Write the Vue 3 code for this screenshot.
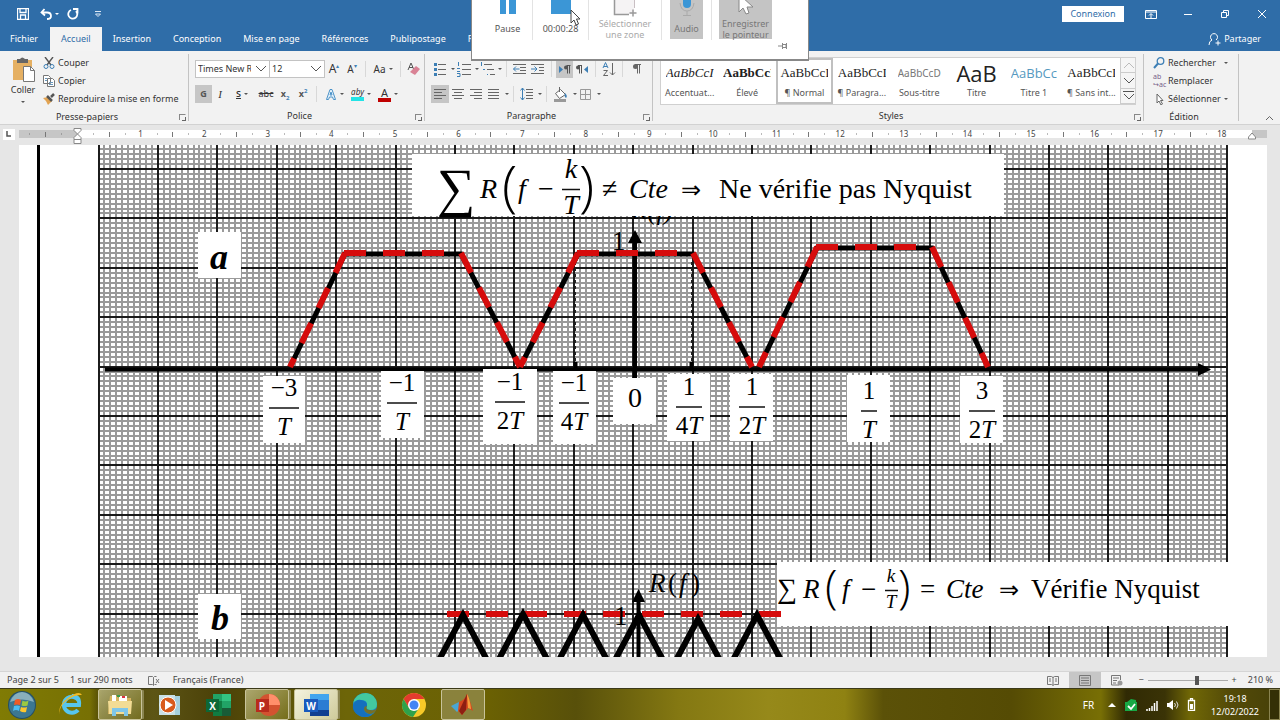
<script setup>
import { ref } from 'vue'

const tabs = ['Fichier', 'Accueil', 'Insertion', 'Conception', 'Mise en page', 'Références', 'Publipostage', 'Révision']
const fontName = ref('Times New Roman')
const fontSize = ref('12')
const zoom = ref(74)

const lines = (rows) => rows.map(([x1, x2, y]) => `M${x1} ${y}H${x2}`).join('')
const grey = (d) => `<path d="${d}" stroke="#666" fill="none"/>`
const blue = (d) => `<path d="${d}" stroke="#3d7fb5" fill="none"/>`

const paraTop = [
  { id: 'bul', label: 'Puces', w: 17, arrow: true, art: grey(lines([[7, 15, 3.5], [7, 15, 8.5], [7, 15, 13.5]])) + '<path d="M3 2h3v3h-3zM3 7h3v3h-3zM3 12h3v3h-3z" fill="#3d7fb5"/>' },
  { id: 'num', label: 'Numérotation', w: 17, arrow: true, art: grey(lines([[7, 16, 3.5], [7, 16, 8.5], [7, 16, 13.5]])) + blue('M3.500 1v4M2 7.500h3M2 10.500h3M2 12.500h3v3h-3') },
  { id: 'mul', label: 'Liste à plusieurs niveaux', w: 16, arrow: true, art: grey(lines([[5, 13, 3.5], [8, 15, 8.5], [11, 16, 13.5]])) + blue('M2.500 1v4M4 8.500h2M8 13.500h1') },
  { id: 's1', sep: true },
  { id: 'out', label: 'Diminuer le retrait', w: 18, art: grey(lines([[2, 15, 3.5], [9, 15, 6.5], [9, 15, 9.5], [2, 15, 12.5]])) + blue('M2.500 8h6M5 5.500L2.500 8L5 10.500') },
  { id: 'in', label: 'Augmenter le retrait', w: 18, art: grey(lines([[2, 15, 3.5], [10, 15, 6.5], [10, 15, 9.5], [2, 15, 12.5]])) + blue('M2 8h6M5.500 5.500L8 8L5.500 10.500') },
  { id: 's2', sep: true },
  { id: 'ltr', label: 'Gauche à droite', w: 17, on: true, art: '<path d="M3 5l4 3.500l-4 3.500z" fill="#3d7fb5"/><path d="M10.500 4.500h4M11.500 4.500v8M13.500 4.500v8" stroke="#555"/><circle cx="10" cy="6.500" r="2" fill="#555"/>' },
  { id: 'rtl', label: 'Droite à gauche', w: 18, art: '<path d="M15 5l-4 3.500l4 3.500z" fill="#3d7fb5"/><path d="M5 4.500h4M6.500 4.500v8M8.500 4.500v8" stroke="#555"/><circle cx="5" cy="6.500" r="2" fill="#555"/>' },
  { id: 's3', sep: true },
  { id: 'az', label: 'Trier', w: 18, art: blue('M3 7L5.500 1.500L8 7M4 5.500h3') + grey('M3.500 9.500h4L3.500 14.500h4.500M12.500 2v12M10 11.500L12.500 14L15 11.500') },
  { id: 's4', sep: true },
  { id: 'pil', label: 'Afficher tout', w: 18, art: '<path d="M8 3.500h6M10.500 3.500v9M12.500 3.500v9" stroke="#666"/><circle cx="8.500" cy="5.500" r="2.500" fill="#666"/>' },
]
const paraBottom = [
  { id: 'l', label: 'Aligner à gauche', w: 18, on: true, art: grey(lines([[3, 15, 3.5], [3, 11, 6.5], [3, 15, 9.5], [3, 11, 12.5]])) },
  { id: 'c', label: 'Centrer', w: 18, art: grey(lines([[3, 15, 3.5], [5, 13, 6.5], [3, 15, 9.5], [5, 13, 12.5]])) },
  { id: 'r', label: 'Aligner à droite', w: 18, art: grey(lines([[3, 15, 3.5], [7, 15, 6.5], [3, 15, 9.5], [7, 15, 12.5]])) },
  { id: 'j', label: 'Justifier', w: 17, arrow: true, art: grey(lines([[3, 14, 3.5], [3, 14, 6.5], [3, 14, 9.5], [3, 14, 12.5]])) },
  { id: 's5', sep: true },
  { id: 'sp', label: 'Interligne', w: 17, arrow: true, art: grey(lines([[8, 15, 3.5], [8, 15, 6.5], [8, 15, 9.5], [8, 15, 12.5]])) + blue('M4.500 2v12M2.500 4.500l2-2.500l2 2.500M2.500 11.500l2 2.500l2-2.500') },
  { id: 's6', sep: true },
  { id: 'fill', label: 'Trame de fond', w: 19, arrow: true, art: '<path d="M4.500 7.500l5-4l5 5l-6 4z" fill="#fff" stroke="#666"/><path d="M8.500 6v-5" stroke="#666"/><path d="M14 7q3 3 1 5q-2-1-1-5" fill="#3d7fb5"/><path d="M3 14.500h12" stroke="#999" stroke-width="3"/>' },
  { id: 'brd', label: 'Bordures', w: 17, arrow: true, art: '<path d="M3.500 3.500h10v10h-10zM8.500 3.500v10M3.500 8.500h10" fill="none" stroke="#999"/>' },
]

const styleItems = [
  { name: 'Accentuat...', text: 'AaBbCcI', cls: 'italic' },
  { name: 'Élevé', text: 'AaBbCcI', cls: 'strong' },
  { name: '¶ Normal', text: 'AaBbCcI', cls: '', on: true },
  { name: '¶ Paragra...', text: 'AaBbCcI', cls: '' },
  { name: 'Sous-titre', text: 'AaBbCcD', cls: 'sub' },
  { name: 'Titre', text: 'AaB', cls: 'title' },
  { name: 'Titre 1', text: 'AaBbCc', cls: 'head' },
  { name: '¶ Sans int...', text: 'AaBbCcI', cls: '' },
]

/* Ruler: one centimetre is 63.6 units, origin at 77 */
const cm = 63.6
const rulerNumbers = Array.from({ length: 18 }, (_, i) => ({ n: i + 1, x: 77 + cm * (i + 1) }))
let rulerTicks = 'M45.500 132v5'
let rulerDots = 'M29 134h1M61 134h1'
for (let i = 0; i < 18; i++) {
  rulerTicks += `M${Math.round(77 + cm * (i + 0.5)) + 0.5} 132v5`
  rulerDots += `M${Math.round(77 + cm * (i + 0.25))} 134h1M${Math.round(77 + cm * (i + 0.75))} 134h1`
}

/* Graph paper */
let minor = ''
let major = ''
for (let i = 0; i <= 190; i++) {
  const x = Math.round(98.5 + i * 5.94)
  if (i % 10 === 0) major += `M${x} 145V657`
  else minor += `M${x} 145V657`
}
for (let i = -4; i < 99; i++) {
  const y = Math.round(169 + i * 4.94)
  if (i % 10 === 0) major += `M98 ${y}H1227`
  else minor += `M98 ${y}H1227`
}

const fractions = [
  { x: 263, y: 376, w: 42, h: 67, cx: 284, bar: 408, half: 15, n: '−3', d: 'T' },
  { x: 381, y: 371, w: 43, h: 67, cx: 402, bar: 403, half: 15, n: '−1', d: 'T' },
  { x: 483, y: 369, w: 54, h: 75, cx: 510, bar: 402, half: 15, n: '−1', d: '2T' },
  { x: 553, y: 371, w: 43, h: 73, cx: 574, bar: 403, half: 15, n: '−1', d: '4T' },
  { x: 667, y: 374, w: 43, h: 67, cx: 689, bar: 407, half: 13, n: '1', d: '4T' },
  { x: 730, y: 374, w: 43, h: 67, cx: 752, bar: 407, half: 13, n: '1', d: '2T' },
  { x: 847, y: 375, w: 43, h: 67, cx: 869, bar: 411, half: 8, n: '1', d: 'T' },
  { x: 960, y: 376, w: 43, h: 67, cx: 982, bar: 411, half: 13, n: '3', d: '2T' },
]
const traps = [
  { l: 290, a: 345, b: 461, r: 520, y: 254 },
  { l: 520, a: 578, b: 693, r: 752, y: 254 },
  { l: 759, a: 817, b: 932, r: 988, y: 248 },
]
const tents = [[463, 614], [523, 613], [583, 614], [639, 614], [698, 618], [757, 614]]
</script>

<template>
  <div class="screen">
    <header class="top">
      <div class="titlebar">
        <div class="quick">
          <button aria-label="Enregistrer"><svg width="12" height="12"><path d="M.5.5h11v11h-11zM3 .5v4h6v-4M3.500 11v-4h5v4" fill="none" stroke="#fff" stroke-width="1.300" /></svg></button>
          <button aria-label="Annuler"><svg width="20" height="12"><path d="M4.500 1L1.500 4.500L5 7.500M2 4.500h5q4 0 4 3.500q0 3-4 3" fill="none" stroke="#fff" stroke-width="1.800" /><path d="M15 5h4l-2 2z" fill="#fff" /></svg></button>
          <button aria-label="Rétablir"><svg width="12" height="12"><path d="M4 2a4.500 4.500 0 1 0 5 1M6 1h4.500v4.500" fill="none" stroke="#fff" stroke-width="1.800" /></svg></button>
          <button aria-label="Personnaliser"><svg width="8" height="8"><path d="M1 1.500h6M1.500 4h5L4 6.500z" fill="none" stroke="#dbe8f5" /></svg></button>
        </div>
        <div class="window">
          <button class="login">Connexion</button>
          <button aria-label="Options du ruban"><svg width="12" height="10"><path d="M.5 1.500h11v8h-11zM.5 3h11M6 9V5M4 6.500l2-2l2 2" fill="none" stroke="#fff" /></svg></button>
          <button aria-label="Réduire"><svg width="12" height="10"><path d="M2 5.500h8" stroke="#fff" /></svg></button>
          <button aria-label="Restaurer"><svg width="12" height="10"><path d="M2.500 3.500h5v5h-5zM4.500 3V1.500h5v5H8" fill="none" stroke="#fff" /></svg></button>
          <button aria-label="Fermer"><svg width="12" height="10"><path d="M2 1l8 8M10 1l-8 8" stroke="#fff" /></svg></button>
        </div>
      </div>
      <nav class="tabs">
        <button v-for="t in tabs" :key="t" :class="{ active: t === 'Accueil' }">{{ t }}</button>
        <button class="share"><svg width="13" height="13"><path d="M1 12q0-4 3-5a3.500 3.500 0 1 1 4 0M7.500 10h5M10 7.500v5" fill="none" stroke="#fff" /></svg>Partager</button>
      </nav>
    </header>

    <section class="ribbon">
      <div class="group clip">
        <div class="body row">
          <button class="paste">
            <svg width="24" height="25"><path d="M2 3h19v20H2z" fill="#e5b063" /><path d="M6 2h3q2-3 5 0h3v4H6z" fill="#666" /><path d="M12.500 9.500h7l4 4v11h-11z" fill="#fff" stroke="#777" /><path d="M19.500 9.500v4h4" fill="none" stroke="#777" /></svg>
            Coller<span class="tri"></span>
          </button>
          <div class="stack">
            <button><svg width="12" height="12"><path d="M2 0l6 8M10 0L4 8" stroke="#555" stroke-width="1.400" /><circle cx="3" cy="9.500" r="2" fill="none" stroke="#3d7fb5" /><circle cx="9" cy="9.500" r="2" fill="none" stroke="#3d7fb5" /></svg>Couper</button>
            <button><svg width="12" height="12"><path d="M.5.5h5l2 2v6h-7zM4.500 3.500h5l2 2v6h-7z" fill="#fff" stroke="#777" /><path d="M6 7.500h4M6 9.500h4M2 3.500h2M2 5.500h2" stroke="#6a98bd" /></svg>Copier</button>
            <button><svg width="12" height="12"><path d="M0 5l5-1l4 4-4 4q-2-5-5-7z" fill="#e2a352" /><path d="M4 3l5 5M8 4l3-3" stroke="#555" stroke-width="2.500" /></svg>Reproduire la mise en forme</button>
          </div>
        </div>
        <footer>Presse-papiers<i class="launch"></i></footer>
      </div>

      <div class="group font">
        <div class="body tools">
          <div class="line">
            <div class="combo family"><select v-model="fontName" aria-label="Police"><option>Times New Roman</option></select><svg width="12" height="8"><path d="M1 1l5 5l5-5" fill="none" stroke="#555" /></svg></div>
            <div class="combo size"><select v-model="fontSize" aria-label="Taille"><option>12</option></select><svg width="12" height="8"><path d="M1 1l5 5l5-5" fill="none" stroke="#555" /></svg></div>
            <button class="w18 big">A<sup>▴</sup></button><button class="w18 mid">A<sup>▾</sup></button>
            <i class="sep"></i><button class="w26 mid">Aa<span class="tri"></span></button><i class="sep"></i>
            <button class="w18" aria-label="Effacer la mise en forme"><svg width="14" height="14"><path d="M1 8L4 1l3 7M2 5.500h4" fill="none" stroke="#555" /><path d="M3 10l6-6l4 3l-5 6z" fill="#d98295" /></svg></button>
          </div>
          <div class="line">
            <button class="w17 on bold">G</button><button class="w16 it">I</button><button class="w28 under"><u>S</u><span class="tri"></span></button><button class="w20 strike">abc</button><button class="w18 bold">x<sub>2</sub></button><button class="w18 bold">x<sup>2</sup></button>
            <i class="sep"></i>
            <button class="w26" aria-label="Effets"><svg width="12" height="13"><path d="M1.500 11.500L5 1.500h2l3.500 10h-2L7.500 9h-3l-1 2.500zM5 7h2L6 4z" fill="#e9f4fc" stroke="#4b92c8" /></svg><span class="tri"></span></button>
            <button class="w28" aria-label="Surlignage"><span class="mark">aby</span><span class="tri"></span></button>
            <button class="w26" aria-label="Couleur"><span class="color">A</span><span class="tri"></span></button>
          </div>
        </div>
        <footer>Police<i class="launch"></i></footer>
      </div>

      <div class="group para">
        <div class="body tools">
          <div v-for="(set, k) in [paraTop, paraBottom]" :key="k" class="line">
            <template v-for="b in set" :key="b.id">
              <i v-if="b.sep" class="sep"></i>
              <button v-else :class="{ on: b.on }" :aria-label="b.label"><svg :width="b.w" height="17" v-html="b.art"></svg><span v-if="b.arrow" class="tri"></span></button>
            </template>
          </div>
        </div>
        <footer>Paragraphe<i class="launch"></i></footer>
      </div>

      <div class="group styles">
        <div class="body">
          <div class="gallery">
            <button v-for="s in styleItems" :key="s.name" :class="{ sel: s.on }"><span class="sample" :class="s.cls">{{ s.text }}</span><span>{{ s.name }}</span></button>
            <div class="scroll">
              <button aria-label="Précédent"><svg width="13" height="9"><path d="M2 7l5-5l5 5" fill="none" stroke="#bbb" /></svg></button>
              <button aria-label="Suivant"><svg width="13" height="9"><path d="M2 2l5 5l5-5" fill="none" stroke="#555" /></svg></button>
              <button aria-label="Tous les styles"><svg width="13" height="11"><path d="M1 1.500h11M2 4l5 5l5-5" fill="none" stroke="#555" /></svg></button>
            </div>
          </div>
        </div>
        <footer>Styles<i class="launch"></i></footer>
      </div>

      <div class="group edit">
        <div class="body stack">
          <button><svg width="12" height="12"><circle cx="7.500" cy="4" r="3.300" fill="none" stroke="#3d7fb5" stroke-width="1.300" /><path d="M5 6.500L1 11" stroke="#3d7fb5" stroke-width="2" /></svg>Rechercher<span class="tri gap"></span></button>
          <button><span class="swap">ab<br>↪ac</span>Remplacer</button>
          <button><svg width="12" height="12"><path d="M4 1v9l2-2l2 4l1.500-1l-2-3.500H10z" fill="#fff" stroke="#666" /></svg>Sélectionner<span class="tri"></span></button>
        </div>
        <footer>Édition</footer>
      </div>
      <button class="fold" aria-label="Réduire le ruban"><svg width="9" height="6"><path d="M1 5l3.500-3.500L8 5" fill="none" stroke="#666" /></svg></button>
    </section>

    <svg class="ruler" viewBox="0 125 1280 20" preserveAspectRatio="xMinYMin slice">
      <rect x="3" y="129" width="12" height="11" fill="#fff" /><path d="M7 131v5h4" fill="none" stroke="#555" stroke-width="1.500" />
      <rect x="19" y="130" width="58" height="8" fill="#c6c6c6" /><rect x="77" y="130" width="1175" height="8" fill="#fff" /><rect x="1252" y="130" width="15" height="8" fill="#c6c6c6" />
      <path :d="rulerTicks" stroke="#777" /><path :d="rulerDots" stroke="#777" />
      <text v-for="r in rulerNumbers" :key="r.n" :x="r.x" y="137">{{ r.n }}</text>
      <path d="M74 128.500h7v2l-3.500 3.500l-3.500-3.500zM74 139.500v-2l3.500-3.500l3.500 3.500v2zM74 139.500h7v4h-7zM1248.500 139v-2l3.500-4l3.500 4v2z" fill="#fff" stroke="#888" />
    </svg>

    <main class="desk">
      <div class="page">
        <svg class="chart" viewBox="19 145 1248 512" preserveAspectRatio="xMinYMin slice">
          <path d="M38.500 145V657" stroke="#000" stroke-width="3" />
          <path :d="minor" stroke="#9a9a9a" stroke-width="2" />
          <path :d="major" stroke="#1c1c1c" stroke-width="2" />

          <text x="652" y="219" class="m" text-anchor="middle">R(f)</text>
          <rect x="412" y="154" width="592" height="62" fill="#fff" />
          <g class="eq first">
            <text x="437" y="206" class="sum1 up">∑</text><text x="480" y="198">R</text><text x="502" y="206" class="par up">(</text><text x="518" y="198">f</text><text x="538" y="198" class="up">−</text>
            <text x="571" y="178" text-anchor="middle">k</text><path d="M562 189.500h18" /><text x="571" y="214" text-anchor="middle">T</text>
            <text x="579" y="206" class="par up">)</text><text x="602" y="198" class="up">≠</text><text x="629" y="198">Cte</text><text x="681" y="198" class="up arrow">⇒</text>
            <text x="719" y="198" class="up">Ne vérifie pas Nyquist</text>
          </g>

          <rect x="198" y="232" width="43" height="46" fill="#fff" /><text x="219" y="269" class="tag">a</text>
          <rect x="198" y="594" width="43" height="45" fill="#fff" /><text x="220" y="630" class="tag">b</text>

          <path d="M575.500 262V366M691.500 262V366" stroke="#222" stroke-dasharray="3 3" />
          <path d="M105 369.500H1200" stroke="#000" stroke-width="4" /><path d="M1198 363l13 6.500l-13 6.500z" />
          <path d="M575.500 362v8M691.500 362v8" stroke="#000" stroke-width="4" />
          <path d="M635 240v140" stroke="#000" stroke-width="4" /><path d="M628 243l7-13l7 13z" />
          <text x="612" y="250" class="m up">1</text>
          <g fill="none">
            <template v-for="t in traps" :key="t.l">
              <path :d="`M${t.l} 367L${t.a} ${t.y}H${t.b}L${t.r} 367`" stroke="#000" stroke-width="5" />
              <path :d="`M${t.a} ${t.y - 1}L${t.l} 367M${t.a - 1} ${t.y - 1}H${t.b - 2}M${t.b} ${t.y - 1}L${t.r} 367`" class="red" />
            </template>
          </g>

          <g v-for="f in fractions" :key="f.cx" class="frac">
            <rect :x="f.x" :y="f.y" :width="f.w" :height="f.h" fill="#fff" />
            <text :x="f.cx" :y="f.bar - 12" class="up">{{ f.n }}</text>
            <path :d="`M${f.cx - f.half} ${f.bar}h${f.half * 2}`" stroke="#111" stroke-width="1.500" />
            <text :x="f.cx" :y="f.bar + 27"><tspan v-if="f.d.length > 1" class="up">{{ f.d[0] }}</tspan>{{ f.d.slice(-1) }}</text>
          </g>
          <g class="frac"><rect x="613" y="378" width="43" height="46" fill="#fff" /><text x="635" y="407" class="up zero">0</text></g>

          <rect x="777" y="562" width="454" height="64" fill="#fff" />
          <path d="M447 614H784" class="red thick" fill="none" />
          <text x="614" y="625" class="m up">1</text>
          <path v-for="t in tents" :key="t[0]" :d="`M${t[0] - 24} ${t[1] + 46}L${t[0]} ${t[1] + 1}L${t[0] + 24} ${t[1] + 46}`" fill="none" stroke="#000" stroke-width="6" />
          <path d="M638.500 600V657" stroke="#000" stroke-width="4" /><path d="M632 602l6.500-13l6.500 13z" />
          <text y="592" class="m"><tspan x="649">R</tspan><tspan x="668" class="up">(</tspan><tspan x="679">f</tspan><tspan x="691" class="up">)</tspan></text>
          <g class="eq">
            <text x="777" y="598" class="sum2 up">∑</text><text x="803" y="598">R</text><text x="825" y="603" class="par2 up">(</text><text x="842" y="598">f</text><text x="861" y="598" class="up">−</text>
            <text x="891" y="582" class="small">k</text><path d="M885 590.500h13" /><text x="891" y="608" class="small">T</text>
            <text x="898" y="603" class="par2 up">)</text><text x="920" y="598" class="up">=</text><text x="946" y="598">Cte</text><text x="999" y="598" class="up arrow">⇒</text>
            <text x="1031" y="598" class="up">Vérifie Nyquist</text>
          </g>
        </svg>
      </div>
    </main>

    <div class="status">
      <span>Page 2 sur 5</span><span>1 sur 290 mots</span>
      <svg width="12" height="11"><path d="M.5 1.500h4l1 1v8l-1-1h-4zM5.500 2.500l1-1h2M6.500 9.500h2M8 4l3 4M11 4L8 8" fill="none" stroke="#777" /></svg>
      <span>Français (France)</span>
      <div class="views">
        <button aria-label="Mode lecture"><svg width="12" height="11"><path d="M.5 1.500h4l1.500 1l1.500-1h4v8h-4L6 10.500l-1.500-1h-4zM6 2v8M2 4h2M2 6h2M8 4h2M8 6h2" fill="none" stroke="#777" /></svg></button>
        <button class="on" aria-label="Page"><svg width="12" height="11"><path d="M.5.5h11v10h-11zM2 3h8M2 5.500h8M2 8h8" fill="none" stroke="#777" /></svg></button>
        <button aria-label="Web"><svg width="12" height="11"><path d="M8 10H.5V.5h9V5M2 3h6M2 5.500h4M2 8h3" fill="none" stroke="#777" /><circle cx="9" cy="8" r="2.500" fill="#999" /></svg></button>
      </div>
      <div class="zoom"><button>−</button><input v-model="zoom" type="range" aria-label="Zoom" min="10" max="113"><button>+</button></div>
      <span class="pct">210 %</span>
    </div>

    <footer class="taskbar">
      <div class="apps">
        <button aria-label="Démarrer"><svg width="30" height="30" viewBox="0 0 30 30"><circle cx="15" cy="15" r="14" fill="#254f66" /><circle cx="15" cy="15" r="13" fill="#3c7791" /><path d="M3 12Q7 2 15 2t12 10q-12-5-24 0" fill="#a9c7ce" opacity=".7" /><path d="M8 10q3-2 6 0l-1 5q-3-1-6 0z" fill="#ef5b26" /><path d="M15.500 10.500q3 2 6 0l-1 5q-3 1-6 0z" fill="#9bc941" /><path d="M7 16q3-1 6 0l-1 5q-3-2-6 0z" fill="#4cbcf2" /><path d="M14 17q3 1 6 0l-1 5q-3 1-6-1z" fill="#fdc62e" /></svg></button>
        <button aria-label="Internet Explorer"><svg width="26" height="26" viewBox="0 0 26 26"><path d="M21 9A8 8 0 1 0 20 18M6 13h15q1-9-7-9" fill="none" stroke="#57c6ee" stroke-width="4" /><path d="M2 23Q-1 14 10 6T24 3Q16 2 8 9T2 23" fill="#f4b921" /></svg></button>
        <button class="run" aria-label="Explorateur"><svg width="28" height="26" viewBox="0 0 28 26"><path d="M4 4h7l2 2h12v16H2z" fill="#d8b45f" /><path d="M6 3h4v6H6zM13 4h8v5h-8z" fill="#fff" /><path d="M11 3h3v2h-3z" fill="#3a9a4c" /><path d="M16 4h3v2h-3z" fill="#d34" /><path d="M2 9h24l-1 13H3z" fill="#f3dc94" /><path d="M6 24v-8h16v8h-4v-4h-8v4z" fill="#7fc6e8" /></svg></button>
        <button aria-label="Lecteur"><svg width="24" height="24" viewBox="0 0 24 24"><path d="M7 3h16v19H7z" fill="#a5cfdc" /><path d="M2 2h16v20H2z" fill="#c9e0e6" /><circle cx="11" cy="12" r="8" fill="#d95b1c" stroke="#fff" /><path d="M8 7v10l8-5z" fill="#fff" /></svg></button>
        <button aria-label="Excel"><svg width="27" height="24" viewBox="0 0 27 24"><path d="M8 1h18v22H8z" fill="#21a366" /><path d="M17 1h9v7h-9z" fill="#33c481" /><path d="M8 8h9v15H8z" fill="#107c41" /><path d="M17 15h9v8h-9z" fill="#185c37" /><path d="M1 6h13v13H1z" fill="#0d6837" /><text x="7.500" y="17" class="glyph">X</text></svg></button>
        <button class="run" aria-label="PowerPoint"><svg width="27" height="24" viewBox="0 0 27 24"><circle cx="15" cy="12" r="11" fill="#d35230" /><path d="M15 1a11 11 0 0 1 11 11H15z" fill="#ff8f6b" /><path d="M2 6h13v13H2z" fill="#b92b1c" /><text x="8" y="17" class="glyph">P</text></svg></button>
        <button class="run bright" aria-label="Word"><svg width="27" height="24" viewBox="0 0 27 24"><path d="M7 1h19v22H7z" fill="#2b7cd3" /><path d="M7 1h19v6H7z" fill="#41a5ee" /><path d="M7 17h19v6H7z" fill="#103f91" /><path d="M1 6h14v13H1z" fill="#185abd" /><text x="8" y="17" class="glyph">W</text></svg></button>
        <button aria-label="Edge"><svg width="26" height="26" viewBox="0 0 26 26"><circle cx="13" cy="13" r="12" fill="#1683cb" /><path d="M1 11Q4 1 14 1q10 1 11 11q0 6-7 6q-5-1-3-4q1-6-6-6q-6 0-8 3" fill="#43c9a0" /><path d="M1 13q3-6 8-5q6 1 6 6q-3 0-3 4q1 4 8 5q-8 4-14 0t-5-10" fill="#1570bd" /><path d="M15 14q-2 4 3 4q5 1 7-2q-2 6-8 6q-5-2-5-5q0-3 3-3" fill="#75702a" /></svg></button>
        <button aria-label="Chrome"><svg width="26" height="26" viewBox="0 0 26 26"><circle cx="13" cy="13" r="12" fill="#f7c928" /><path d="M2.600 7A12 12 0 0 1 23.400 7H13L8 16z" fill="#e33b2e" /><path d="M2.600 7A12 12 0 0 0 12 25l6-9H8z" fill="#2fa24b" /><circle cx="13" cy="13" r="6" fill="#fff" /><circle cx="13" cy="13" r="4.500" fill="#4285f4" /></svg></button>
        <button class="run dim" aria-label="MATLAB"><svg width="26" height="24" viewBox="0 0 26 24"><path d="M1 13l8-4l3 5l-5 5z" fill="#4aa6d5" /><path d="M9 9q6-2 8-8q2 3 6 17l-5-3l-6 7l-4-4z" fill="#d5481f" /><path d="M17 1l-1 16l-4 5l-3-4z" fill="#8e1f12" /><path d="M17 1q3 5 4 15l-3-1z" fill="#f6a03c" /></svg></button>
      </div>
      <div class="tray">
        <span class="lang">FR</span>
        <svg width="8" height="6"><path d="M0 5h8L4 1z" fill="#fff" /></svg>
        <svg width="14" height="14"><path d="M1 4h12v9H1zM3 4l4-3l5 1v2" fill="#18a845" /><path d="M4 8l3 3l4-5" fill="none" stroke="#fff" stroke-width="1.800" /></svg>
        <svg width="12" height="12"><path d="M1 12v-2M3.500 12V9M6 12V7M8.500 12V4M11 12V2" stroke="#fff" stroke-width="1.500" /></svg>
        <svg width="13" height="12"><path d="M1 4h2l4-3v10l-4-3H1z" fill="#fff" /><path d="M8.500 4q2 2 0 4M10.500 2.500q3 3.500 0 7" fill="none" stroke="#ddd" /></svg>
        <svg width="9" height="13"><path d="M1.500 2.500h6v10h-6zM3.500 2V.5h2V2" fill="none" stroke="#fff" stroke-width="1.300" /><path d="M3 6h3v5H3z" fill="#fff" /></svg>
        <time>19:18<br>12/02/2022</time>
        <button class="peek" aria-label="Afficher le bureau"></button>
      </div>
    </footer>

    <aside class="recorder">
      <button class="r1"><svg width="18" height="18"><path d="M1 0h6v14H1zM10 0h7v14h-7z" fill="#3b96d6" /></svg><span>Pause</span></button>
      <button class="r2"><svg width="22" height="18"><path d="M1 0h20v14H1z" fill="#3b96d6" /></svg><span>00:00:28</span></button>
      <button class="r3"><svg width="26" height="18"><path d="M22.500-1v9" fill="none" stroke="#c9bfc3" /><path d="M3 0h19v14H3z" fill="#f5f3f4" /><path d="M2.500 0v14.500H17M21 9.500v7M17.500 13h7" fill="none" stroke="#999" stroke-width="1.500" /></svg><span>Sélectionner<br>une zone</span></button>
      <button class="r4"><span class="shade"><svg width="20" height="18"><rect x="6" y="-5" width="8" height="13" rx="4" fill="#3b96d6" /><path d="M3 3q1 8 7 8t7-8M10 11v4M6 15.500h8" fill="none" stroke="#aaa" /></svg><span>Audio</span></span></button>
      <button class="r5"><span class="shade"><svg width="20" height="18"><path d="M3-5v17l4-4l3 6l3-1l-2-6h6L5-4z" fill="#fff" stroke="#888" /></svg><span>Enregistrer<br>le pointeur</span></span></button>
      <svg class="pin" width="10" height="8"><path d="M0 4h4M4.500 1v6M5 2.500h3v3H5M8.500 1v6" fill="none" stroke="#888" /></svg>
      <svg class="cursor" width="12" height="18"><path d="M1 1v13l3-3l2 5l2.500-1l-2-5H10z" fill="#fff" stroke="#444" /></svg>
    </aside>
  </div>
</template>

<style>
body { margin: 0; }
</style>

<style scoped>
.screen { position: relative; min-height: 100vh; display: flex; flex-direction: column; overflow: hidden; background: #e6e6e6; font-family: "Noto Sans", "Open Sans", sans-serif; font-size: 9px; line-height: 12px; color: #333; }
button { font: inherit; color: inherit; background: none; border: 0; padding: 0; display: flex; align-items: center; justify-content: center; white-space: nowrap; }
svg { display: block; flex: none; }
.top { background: #2f6da8; color: #fff; }
.titlebar { height: 27px; display: flex; justify-content: space-between; align-items: center; }
.quick { display: flex; align-items: center; gap: 11px; padding-left: 17px; }
.quick button:nth-child(3) { margin-left: -4px; }
.quick button:last-child { margin-left: 4px; }
.window { display: flex; align-items: center; gap: 25px; padding-right: 12px; }
.login { background: #fff; color: #2f6da8; width: 62px; height: 16px; margin-right: -4px; }
.tabs { display: flex; height: 24px; }
.tabs button { padding: 0 11px; }
.tabs button:first-child { padding: 0 12px 0 10px; }
.tabs .active { background: #f3f3f3; color: #2f6da8; }
.tabs .share { margin-left: auto; padding-right: 19px; gap: 3px; }

.ribbon { display: flex; height: 74px; background: #f2f2f2; border-bottom: 1px solid #d2d2d2; box-sizing: border-box; }
.group { position: relative; display: flex; flex-direction: column; border-right: 1px solid #c3c3c3; margin: 3px 0; box-sizing: border-box; }
.clip { width: 189px; }
.font { width: 236px; }
.para { width: 228px; }
.styles { flex: 1; }
.edit { width: 95px; }
.body { flex: 1; }
.group footer { text-align: center; height: 14px; line-height: 18px; margin-right: 14px; }
.launch { position: absolute; right: 2px; bottom: 1px; width: 5px; height: 5px; border: 1px solid #888; border-right-color: transparent; border-bottom: 0; }
.launch::after { content: ""; position: absolute; right: -1px; bottom: -1px; border: solid #666; border-width: 0 1px 1px 0; width: 3px; height: 3px; }
.row { display: flex; }
.paste { width: 46px; flex-direction: column; justify-content: flex-start; padding-top: 3px; gap: 2px; }
.stack { display: flex; flex-direction: column; align-items: flex-start; }
.stack button { gap: 3px; height: 18px; }
.clip .stack { margin-left: -3px; }
.edit .stack { padding-left: 9px; }
.tri { display: inline-block; border: solid transparent; border-width: 2px 2px 0; border-top-color: #555; margin-left: 3px; flex: none; }
.stack .tri { margin-left: 0; }
.paste .tri { margin: 3px 0 0; }
.stack .gap { margin-left: 5px; }
.swap { font-size: 7px; line-height: 8px; color: #765d88; text-align: left; width: 12px; }
.tools { padding: 6px 0 0 6px; display: flex; flex-direction: column; gap: 7px; }
.line { display: flex; align-items: center; height: 18px; }
.sep { width: 1px; height: 16px; background: #d8d8d8; margin: 0 4px; }
.on { background: #c6c6c6; }
.line button { height: 18px; }
.w16 { width: 16px; } .w17 { width: 17px; } .w18 { width: 18px; } .w20 { width: 20px; } .w26 { width: 26px; } .w28 { width: 28px; }
.big { font-size: 12px; } .mid { font-size: 10px; }
sup, sub { font-size: 6px; line-height: 6px; color: #3d7fb5; }
sup { align-self: flex-start; margin-top: 3px; } sub { align-self: flex-end; margin-bottom: 2px; }
.bold { font-weight: 700; color: #555; }
.it { font: italic 11px "Liberation Serif", serif; }
.under { font-weight: 600; }
.strike { text-decoration: line-through; }
.mark { border-bottom: 4px solid #23e3e6; line-height: 10px; font-size: 8px; font-style: italic; }
.color { border-bottom: 4px solid #c00000; line-height: 11px; font-size: 11px; padding: 0 3px; }
.combo { display: flex; align-items: center; box-sizing: border-box; height: 18px; background: #fff; border: 1px solid #c3c3c3; }
.combo select { appearance: none; flex: 1; min-width: 0; border: 0; background: none; font: inherit; color: inherit; padding: 0 0 0 2px; }
.combo svg { margin: 0 2px 0 4px; }
.family { width: 75px; } .size { width: 56px; margin-left: -1px; }
.gallery { display: flex; margin: 3px 7px 0; height: 46px; background: #fff; border: 1px solid #d0d0d0; }
.gallery > button { flex: 1 1 0; min-width: 0; flex-direction: column; gap: 5px; overflow: hidden; color: #555; }
.sel { box-shadow: inset 0 0 0 2px #c0c0c0; }
.sample { font: 13px/18px "Liberation Serif", serif; height: 18px; color: #222; max-width: 48px; overflow: hidden; }
.italic { font-style: italic; } .strong { font-weight: 700; }
.sub { font: 10px/18px "Noto Sans", sans-serif; color: #777; } .title { font: 22px/18px "Open Sans", sans-serif; } .head { font: 13px/18px "Open Sans", sans-serif; color: #5599c0; }
.scroll { width: 14px; display: flex; flex-direction: column; border-left: 1px solid #ccc; }
.scroll button { flex: 1; background: #f5f5f5; border-bottom: 1px solid #ccc; }
.fold { width: 41px; align-items: flex-end; padding: 0 0 3px 20px; box-sizing: border-box; }

.ruler { width: 100%; height: 20px; }
.ruler text { font-size: 8px; text-anchor: middle; fill: #444; }
.desk { flex: 1; display: flex; padding: 0 13px 14px 19px; }
.page { flex: 1; min-width: 0; background: #fff; }
.chart { width: 100%; height: 512px; }
.m, .eq text, .frac text, .tag { font-family: "Liberation Serif", serif; font-style: italic; font-size: 27px; }
.eq text { font-size: 27px; }
.first text { font-size: 28px; }
.eq path { stroke: #111; stroke-width: 1.500; }
.frac text { font-size: 25px; text-anchor: middle; }
.chart .up { font-style: normal; }
.frac .zero { font-size: 28px; }
.tag { font-weight: 700; font-size: 36px; text-anchor: middle; }
.eq .sum1 { font-size: 54px; } .eq .sum2 { font-size: 28px; }
.eq .par, .eq .par2 { font-family: "Open Sans", sans-serif; font-weight: 300; font-size: 56px; } .eq .par2 { font-size: 46px; }
.eq .small { font-size: 19px; text-anchor: middle; } .eq .arrow { font-size: 24px; }
.red { stroke: #d60c0c; stroke-width: 6; stroke-dasharray: 22 17; }

.status { display: flex; align-items: center; height: 17px; background: #f1f1f1; border-top: 1px solid #d5d5d5; box-sizing: border-box; padding: 0 7px; gap: 15px; color: #444; }
.status > span:nth-child(2) { margin-left: -4px; }
.status > svg + span { margin-left: -2px; }
.views { display: flex; margin-left: auto; height: 100%; }
.views button { width: 32px; }
.zoom { display: flex; align-items: center; gap: 4px; margin-left: -10px; }
.zoom input { appearance: none; width: 80px; height: 10px; margin: 0; background: linear-gradient(#aaa, #aaa) center / 100% 1px no-repeat; }
.zoom input::-webkit-slider-thumb { appearance: none; width: 4px; height: 9px; background: #555; }
.pct { margin-left: -4px; }

.taskbar { height: 32px; box-sizing: border-box; border-top: 1px solid #3c3a1a; display: flex; justify-content: space-between; background: linear-gradient(90deg, #807b04 0, #777004 7%, #4a4306 8%, #5d5515 12%, #4b4108 17%, #6d6508 27%, #6b6103 38%, #58500a 45%, #847812 53%, #96891a 60%, #8f8212 66%, #5b5108 69%, #554b04 79%, #786f05 86%, #302a04 88%, #3a3306 91%, #716806 93%, #544b08 96%, #464008 100%); color: #fff; }
.apps { display: flex; gap: 5px; }
.apps button { width: 44px; }
.apps .run { box-sizing: border-box; border: 1px solid #c8c39a; background: linear-gradient(135deg, #d8d5a0aa, #8a842b88); border-radius: 2px; box-shadow: 3px 0 0 -1px #8a8450; }
.apps .bright { background: linear-gradient(135deg, #f4f3df, #cfcb9a); }
.apps .dim { background: #a5a06f88; box-shadow: none; }
.glyph { font: 700 10px "Open Sans", sans-serif; fill: #fff; text-anchor: middle; }
.tray { display: flex; align-items: center; gap: 8px; }
.lang { margin-right: 6px; font-size: 10px; }
.tray time { text-align: center; line-height: 13px; margin-left: 7px; }
.peek { width: 11px; height: 100%; border: 1px solid #8a8450; background: #343006; margin-left: 2px; }

.recorder { position: absolute; left: 471px; top: 0; width: 338px; height: 61px; box-sizing: border-box; background: #fff; border: 1px solid #888; border-top: 0; border-bottom-width: 2px; display: grid; grid-template-columns: 50px 56px 73px 50px 67px; grid-template-rows: 40px; padding-left: 11px; color: #777; line-height: 11px; }
.recorder > button { flex-direction: column; justify-content: flex-start; border-right: 1px solid #e3e3e3; }
.recorder > .r5 { border-right: 0; }
.recorder button > span { min-height: 20px; display: flex; align-items: center; text-align: center; }
.recorder .r1, .recorder .r2 { color: #555; }
.recorder .r3 { color: #aaa; }
.recorder .shade { flex-direction: column; background: #c4c4c4; height: 39px; min-width: 33px; padding: 0 3px; }
.recorder .r4 .shade { padding: 0; }
.shade > span { min-height: 20px; display: flex; align-items: center; }
.pin { position: absolute; right: 20px; top: 42px; }
.cursor { position: absolute; left: 98px; top: 9px; }
</style>
